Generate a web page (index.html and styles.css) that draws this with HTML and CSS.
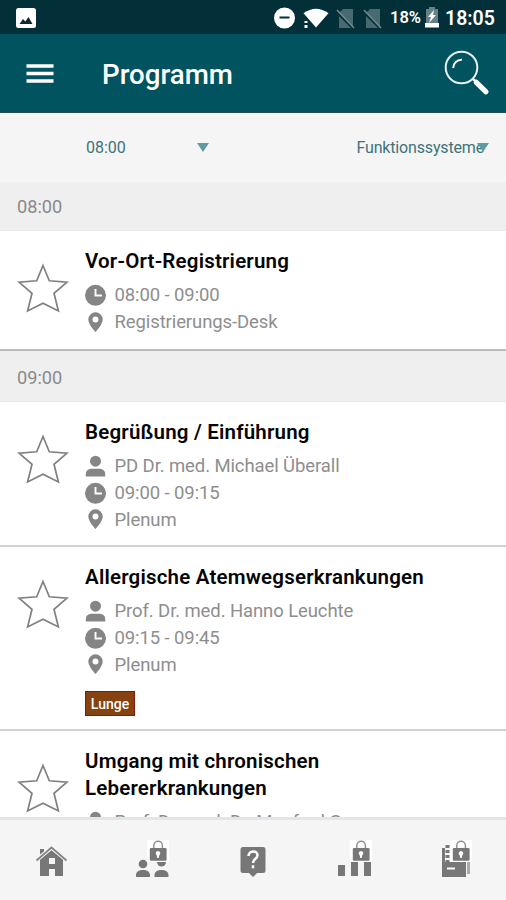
FILE: index.html
```html
<!DOCTYPE html>
<html lang="de">
<head>
<meta charset="utf-8">
<meta name="viewport" content="width=device-width, initial-scale=1">
<title>Programm</title>
<link rel="stylesheet" href="styles.css">
</head>
<body>
<svg class="defs" aria-hidden="true">
  <symbol id="star" viewBox="0 0 52 50"><path d="M26 2.5 32.3 17.8 50 19.1 37 30.3 41.4 48 26 40.3 10.6 48 15 30.3 2 19.1 19.7 17.8Z" fill="none" stroke="#808080" stroke-width="1.7"/></symbol>
  <symbol id="clock" viewBox="0 0 22 22"><circle cx="10.5" cy="11.3" r="10.5" fill="#858585"/><path d="M10.500 5V11.500H17" fill="none" stroke="#fff" stroke-width="1.900"/></symbol>
  <symbol id="pin" viewBox="0 0 22 22"><path fill="#858585" fill-rule="evenodd" d="M10.500 1.300a7.200 7.200 0 0 0-7.200 7.200C3.300 13.500 10.500 21 10.500 21s7.200-7.500 7.200-12.500a7.200 7.200 0 0 0-7.200-7.200Zm0 4.300a3 3 0 1 1 0 6 3 3 0 0 1 0-6Z"/></symbol>
  <symbol id="person" viewBox="0 0 22 22"><circle cx="10.500" cy="6.200" r="5.500" fill="#858585"/><path fill="#858585" d="M.8 21.500v-2.500c0-3.600 3-5.200 6.200-5.200h7c3.200 0 6.200 1.600 6.200 5.200v2.500Z"/></symbol>
  <symbol id="lock" viewBox="0 0 22 22"><path fill="#fff" d="M0 0h22v22H0z"/><path d="M6.800 9V5.500a4.300 4.300 0 0 1 8.600 0V9" fill="none" stroke="#929292" stroke-width="1.500"/><rect x="2.800" y="8" width="16.800" height="12.800" rx="1.200" fill="#777"/><path fill="#fff" d="M11 11a2.300 2.300 0 0 1 1.400 4.100L11.700 18h-1.400l-.7-2.900A2.300 2.300 0 0 1 11 11Z"/></symbol>
</svg>
<div class="screen">
  <div class="status">
    <svg class="status-photo" viewBox="0 0 20 20"><rect width="20" height="20" rx="2.500" fill="#fff"/><path fill="#10282d" d="M3.500 16 7 11l2.300 2.600L12.500 9l4 7Z"/></svg>
    <svg class="status-icons" viewBox="0 0 112 24"><circle cx="11.500" cy="12" r="10.500" fill="#fff"/><path d="M6.500 11.500h10" stroke="#022f38" stroke-width="2"/><path fill="#fff" d="M30.500 7.300Q43 -2 55.500 7.300L43 21.500Z"/><path d="M33 15v2m0 2v3" stroke="#fff" stroke-width="3"/><g fill="#466a70"><path d="M70 3h10v18L66 7Z"/><path d="M66 10v12h12Z"/><path d="M97 3h10v18L93 7Z"/><path d="M93 10v12h12Z"/></g><path d="m64 4 17 18M91 4l17 18" stroke="#6d898e" stroke-width="1.600"/></svg>
    <span class="percent">18%</span>
    <svg class="battery" viewBox="0 0 14 21"><path fill="#668186" d="M4 0h6v2h3v15H1V2h3Z"/><path fill="#fff" d="M9 3 3 10h3l-2 6 7-8H8ZM0 16h14v4.500H0Z"/></svg>
    <span class="time">18:05</span>
  </div>
  <header class="appbar">
    <svg class="menu" viewBox="0 0 28 22"><path d="M.5 3h27M.5 10.500h27M.5 18h27" stroke="#fff" stroke-width="3.700"/></svg>
    <h1>Programm</h1>
    <svg class="search" viewBox="0 0 46 46"><circle cx="17.500" cy="17.500" r="15.800" fill="none" stroke="#e9f1f2" stroke-width="2"/><path d="M9.200 18a8.300 8.300 0 0 1 8.700-8.300" fill="none" stroke="#fff" stroke-width="2"/><path d="m28.600 28.600 3.800 3.600" stroke="#fff" stroke-width="2.500"/><path d="M32.300 32.300 42 41.800" stroke="#fff" stroke-width="5.200" stroke-linecap="round"/></svg>
  </header>
  <div class="filters">
    <div class="filter filter-time"><span>08:00</span><i class="arrow"></i></div>
    <div class="filter filter-topic"><span>Funktionssysteme</span><i class="arrow"></i></div>
  </div>
  <main class="list">
    <h2 class="section">08:00</h2>
    <article class="item last">
      <svg class="star"><use href="#star"/></svg>
      <div class="body">
        <h3>Vor-Ort-Registrierung</h3>
        <p class="row"><svg><use href="#clock"/></svg>08:00 - 09:00</p>
        <p class="row"><svg><use href="#pin"/></svg>Registrierungs-Desk</p>
      </div>
    </article>
    <h2 class="section">09:00</h2>
    <article class="item">
      <svg class="star"><use href="#star"/></svg>
      <div class="body">
        <h3>Begrüßung / Einführung</h3>
        <p class="row"><svg><use href="#person"/></svg>PD Dr. med. Michael Überall</p>
        <p class="row"><svg><use href="#clock"/></svg>09:00 - 09:15</p>
        <p class="row"><svg><use href="#pin"/></svg>Plenum</p>
      </div>
    </article>
    <article class="item tagged">
      <svg class="star"><use href="#star"/></svg>
      <div class="body">
        <h3>Allergische Atemwegserkrankungen</h3>
        <p class="row"><svg><use href="#person"/></svg>Prof. Dr. med. Hanno Leuchte</p>
        <p class="row"><svg><use href="#clock"/></svg>09:15 - 09:45</p>
        <p class="row"><svg><use href="#pin"/></svg>Plenum</p>
        <span class="tag">Lunge</span>
      </div>
    </article>
    <article class="item">
      <svg class="star"><use href="#star"/></svg>
      <div class="body">
        <h3>Umgang mit chronischen<br>Lebererkrankungen</h3>
        <p class="row"><svg><use href="#person"/></svg>Prof. Dr. med. Dr. Manfred G</p>
      </div>
    </article>
  </main>
  <nav class="tabs">
    <svg viewBox="0 0 36 40"><path fill="#777" d="M7 11h4v5l-4 4ZM18.500 12 30 21.500V38H22v-7h-6v7H7V21.500Z"/><path d="m3 22.500 15.500-13L34 22.500" fill="none" stroke="#f5f5f5" stroke-width="4"/><path d="m3.500 22.500 15-13 15 13" fill="none" stroke="#858585" stroke-width="1.800"/><path fill="#f5f5f5" d="M16 20h6v6h-6z"/></svg>
    <svg viewBox="0 0 36 40"><g fill="#777"><circle cx="9" cy="26" r="4.300"/><circle cx="27.500" cy="24" r="4.500"/><path d="M2 39v-1.500c0-4 3-5.500 7-5.500s7 1.500 7 5.500V39ZM20.500 39v-1.500c0-4 3-5.500 7-5.500s7 1.500 7 5.500V39Z"/></g><use href="#lock" x="13" y="2" width="22" height="22"/></svg>
    <svg viewBox="0 0 36 40"><path fill="#777" d="M8 9h20a2.500 2.500 0 0 1 2.500 2.500v21A2.500 2.500 0 0 1 28 35h-6l-4 4-4-4H8a2.500 2.500 0 0 1-2.500-2.500v-21A2.500 2.500 0 0 1 8 9Z"/><path d="M13.500 18c0-6 9-6 9-.8 0 3.600-4.500 3.600-4.500 7.800m0 2.300v3" fill="none" stroke="#fff" stroke-width="2.500"/></svg>
    <svg viewBox="0 0 36 40"><path fill="#777" d="M2 27h7v11H2Zm13-3h7v14h-7Zm13 0h7v14h-7Z"/><use href="#lock" x="14" y="2" width="22" height="22"/></svg>
    <svg viewBox="0 0 36 40"><path fill="#777" d="M5 10h3v14h21v15H5Z"/><path d="M10.500 7v17" stroke="#777" stroke-width="4" stroke-dasharray="3 2"/><path d="M31.500 24v12" stroke="#aaa" stroke-width="3"/><path d="M10 30.500h8" stroke="#fff" stroke-width="2"/><use href="#lock" x="13" y="2" width="22" height="22"/></svg>
  </nav>
</div>
</body>
</html>
```
FILE: styles.css
```css
* { box-sizing: border-box; margin: 0; padding: 0; }
body { font-family: Roboto, "Liberation Sans", sans-serif; background: #fff; }
svg { display: block; flex: none; }
.defs { position: absolute; width: 0; height: 0; }
.screen { width: 506px; height: 900px; display: flex; flex-direction: column; overflow: hidden; }
.status { height: 34px; flex: none; background: #022f38; display: flex; align-items: center; padding: 1px 11px 0 16px; color: #fff; font-weight: 500; }
.status-photo { width: 20px; height: 20px; }
.status-icons { width: 112px; height: 24px; margin-left: auto; margin-right: 5px; }
.percent { font-size: 16.500px; width: 31px; font-weight: 600; }
.battery { width: 14px; height: 21px; margin: 0 6px 0 4px; }
.time { width: 50px; font-size: 19.500px; line-height: 34px; margin-top: 2px; white-space: nowrap; font-weight: 600; }
.appbar { height: 79px; flex: none; background: #00535f; border-bottom: 1px solid #244d58; display: flex; align-items: center; padding: 0 16px 0 26px; color: #fff; }
.menu { width: 28px; height: 22px; margin-top: 2px; }
.appbar h1 { margin: 4px 0 0 48px; font-size: 27.700px; line-height: 34px; font-weight: 500; }
.search { width: 46px; height: 46px; margin-left: auto; }
.filters { height: 69px; flex: none; background: #f5f5f5; display: flex; align-items: center; justify-content: space-between; padding: 0 17px 0 86px; color: #3f7379; font-size: 16px; }
.filter { display: flex; align-items: center; }
.filter-time { width: 123px; justify-content: space-between; }
.filter-topic span { letter-spacing: -.16px; }
.filter-topic .arrow { margin-left: -7px; }
.arrow { border: 6px solid transparent; border-top: 9px solid #609ba1; border-bottom: 0; }
.list { flex: 1; min-height: 0; overflow: hidden; }
.section { height: 49px; background: #efefef; border-bottom: 1px solid #e9e9e9; color: #8a8a8a; font-size: 18.200px; line-height: 49px; font-weight: 400; padding-left: 17px; }
.item + .section { height: 51px; line-height: 54px; }
.item { height: 145px; display: flex; align-items: flex-start; border-bottom: 2px solid #d2d2d2; padding: 17px 0 0 17px; background: #fff; }
.item.last { height: 120px; border-bottom-color: #bbb; }
.item.tagged { height: 184px; }
.star { width: 52px; height: 50px; margin: 15px 16px 0 0; }
.body h3 { color: #050505; font-size: 20.500px; font-weight: 600; letter-spacing: .2px; line-height: 27px; margin-bottom: 7px; white-space: nowrap; }
.row { display: flex; align-items: center; height: 26.700px; gap: 7.500px; color: #8e8e8e; font-size: 18.500px; letter-spacing: -.1px; white-space: nowrap; }
.row svg { width: 22px; height: 22px; margin-top: -1px; }
.tag { display: flex; align-items: center; justify-content: center; width: 50px; height: 25px; margin-top: 13px; border: 1px solid #8b1609; background: #864211; color: #fff; font-size: 14px; font-weight: 500; }
.tabs { height: 83px; flex: none; background: #f5f5f5; border-top: 3px solid #e5e5e5; display: flex; justify-content: space-around; padding-top: 18px; }
.tabs svg { width: 36px; height: 40px; }
```
